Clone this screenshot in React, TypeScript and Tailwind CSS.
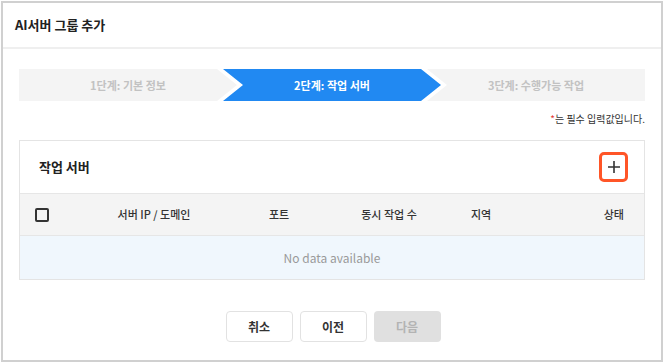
const font = { fontFamily: '"Noto Sans CJK KR", "Noto Sans", sans-serif' };

const steps = [
  { label: "1단계: 기본 정보", active: false, clip: "polygon(0 0, calc(100% - 20px) 0, 100% 50%, calc(100% - 20px) 100%, 0 100%)" },
  { label: "2단계: 작업 서버", active: true, clip: "polygon(0 0, calc(100% - 20px) 0, 100% 50%, calc(100% - 20px) 100%, 0 100%, 20px 50%)" },
  { label: "3단계: 수행가능 작업", active: false, clip: "polygon(0 0, 100% 0, 100% 100%, 0 100%, 20px 50%)" },
];

function Stepper() {
  return (
    <div className="flex h-8">
      {steps.map((s, i) => (
        <div
          key={s.label}
          className={
            "flex w-[218px] items-center justify-center text-[11px] font-bold " +
            (i > 0 ? "-ml-[14px] " : "") +
            (s.active ? "bg-[#2189f2] text-white" : "bg-[#f4f4f4] text-[#c2c2c2]")
          }
          style={{ clipPath: s.clip }}
        >
          {s.label}
        </div>
      ))}
    </div>
  );
}

export default function App() {
  return (
    <div className="h-[363px] w-[665px] bg-white pl-px pt-px" style={font}>
      <div className="flex h-[361px] w-[662px] flex-col border-2 border-[#d0d0d0]">
        <div className="flex h-[46px] shrink-0 items-center border-b-2 border-[#efefef] px-3 text-[13px] font-bold text-[#222]">
          AI서버 그룹 추가
        </div>

        <div className="px-4 pt-5">
          <Stepper />

          <p className="mt-[11px] text-right text-[10px] leading-[14px] text-[#333]">
            <span className="text-[#e53935]">*</span>는 필수 입력값입니다.
          </p>

          <div className="mt-[14px] border border-[#e4e4e4]">
            <div className="flex h-[52px] items-center justify-between pl-[19px] pr-[16px]">
              <span className="text-[13px] font-bold text-[#222]">작업 서버</span>
              <button className="flex h-[30px] w-[29px] items-center justify-center rounded-[5px] border-[3px] border-[#ff5527] bg-white">
                <svg width="14" height="14" viewBox="0 0 14 14">
                  <path d="M7 1v12M1 7h12" stroke="#333" strokeWidth="1.6" />
                </svg>
              </button>
            </div>
            <div className="grid h-[43px] grid-cols-[45px_178px_72px_148px_36px_1fr] items-center border-y border-[#e6e6e6] bg-[#f4f4f4] pr-[20px] text-[11px] font-medium text-[#333]">
              <span className="ml-[15px] h-[14px] w-[14px] rounded-[2px] border-2 border-[#333]" />
              <span className="text-center">서버 IP / 도메인</span>
              <span className="text-center">포트</span>
              <span className="text-center">동시 작업 수</span>
              <span className="text-center">지역</span>
              <span className="text-right">상태</span>
            </div>
            <div className="flex h-[43px] items-center justify-center bg-[#f0f7fd] text-[12px] text-[#9a9a9a]">
              No data available
            </div>
          </div>
        </div>

        <div className="mt-[31px] flex justify-center gap-[7px] pl-[2px]">
          <button className="h-[31px] w-[67px] rounded border border-[#e2e2e2] bg-white text-[12px] font-bold text-[#333]">취소</button>
          <button className="h-[31px] w-[67px] rounded border border-[#e2e2e2] bg-white text-[12px] font-bold text-[#333]">이전</button>
          <button className="h-[31px] w-[67px] rounded bg-[#e0e0e0] text-[12px] font-bold text-[#b3b3b3]">다음</button>
        </div>
      </div>
    </div>
  );
}
